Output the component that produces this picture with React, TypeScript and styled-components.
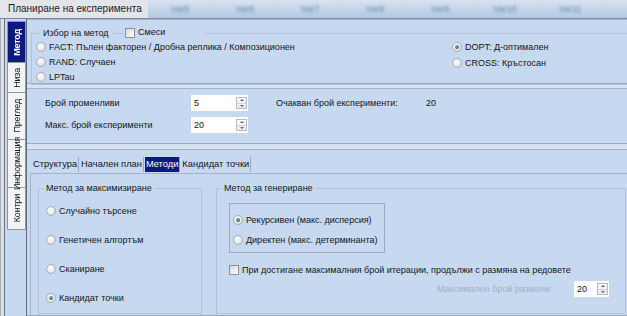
import React from 'react';
import styled, { createGlobalStyle } from 'styled-components';

const GlobalStyle = createGlobalStyle`
  html, body { margin: 0; padding: 0; background: #c6d9f1; }
  body { font-family: "Liberation Sans", Tahoma, sans-serif; font-size: 9px; color: #151515; }
  * { box-sizing: border-box; }
`;

const Window = styled.div`
  width: 627px;
  height: 316px;
  overflow: hidden;
  display: flex;
  flex-direction: column;
  background: #c6d9f1;
`;

const TitleBar = styled.div`
  height: 19px;
  flex: none;
  display: flex;
  border-bottom: 1px solid #7d8797;
  background: #e2e5ea;
`;

const Title = styled.div`
  width: 148px;
  flex: none;
  padding-left: 8px;
  line-height: 18px;
  font-size: 10px;
  color: #1b1b1b;
  white-space: nowrap;
`;

const HeaderCells = styled.div`
  flex: 1;
  min-width: 0;
  display: flex;
  background: linear-gradient(#d8e3f1, #b3c8e3);
`;

const HeaderCell = styled.div`
  width: 65px;
  flex: none;
  text-align: center;
  line-height: 18px;
  color: #6282b2;
  filter: blur(1.4px);
  border-right: 1px solid #c8d6ea;
`;

const Body = styled.div`
  flex: 1;
  min-height: 0;
  display: flex;
`;

const FrameEdge = styled.div`
  width: 5px;
  flex: none;
  border-left: 1px solid #a7adb6;
  border-right: 1px solid #67707e;
  background: #dde1e7;
`;

const SideTabs = styled.div`
  width: 22px;
  flex: none;
  display: flex;
  flex-direction: column;
  padding: 3px 0 0 2px;
  border-right: 1px solid #5f6b7d;
  background: #c6d9f1;
`;

const SideTab = styled.div<{ $active?: boolean; $h: number }>`
  height: ${p => p.$h}px;
  width: 19px;
  flex: none;
  display: flex;
  align-items: center;
  justify-content: center;
  border: 1px solid #8e96a3;
  margin-top: -1px;
  background: ${p => (p.$active ? '#0d1a7c' : '#f3f4f6')};
  color: ${p => (p.$active ? '#ffffff' : '#151515')};
  font-weight: ${p => (p.$active ? 'bold' : 'normal')};
`;

const SideLabel = styled.span`
  writing-mode: vertical-rl;
  text-orientation: mixed;
  transform: rotate(180deg);
  font-size: 9px;
  letter-spacing: -0.2px;
  line-height: 12px;
  white-space: nowrap;
`;

const Content = styled.div`
  flex: 1;
  min-width: 0;
  display: flex;
  flex-direction: column;
`;

const Section = styled.div<{ $h?: number }>`
  flex: ${p => (p.$h ? 'none' : '1')};
  height: ${p => (p.$h ? `${p.$h}px` : 'auto')};
  border-top: 1px solid #a3b3c8;
  border-bottom: 1px solid #9aaac0;
  background: #c6d9f1;
`;

const SectionGap = styled.div<{ $h: number }>`
  height: ${p => p.$h}px;
  flex: none;
  background: #d6e3f3;
`;

const Group = styled.fieldset<{ $w?: number; $h?: number }>`
  margin: 0;
  padding: 0;
  min-width: 0;
  border: 1px solid #b3c2d6;
  width: ${p => (p.$w ? `${p.$w}px` : 'auto')};
  height: ${p => (p.$h ? `${p.$h}px` : 'auto')};
  position: relative;
  flex: none;
`;

const Legend = styled.legend`
  padding: 0 3px;
  margin-left: 4px;
  line-height: 13px;
  white-space: nowrap;
`;

const MethodGroup = styled(Group)`
  margin: 7px 0 0 4px;
  height: 58px;
  border-right: none;
  display: flex;
  padding: 0 0 0 4px;
`;

const LegendCheck = styled.label`
  position: absolute;
  top: -14px;
  left: 91px;
  display: flex;
  align-items: center;
  gap: 3px;
  padding: 0 40px 0 2px;
  background: #c6d9f1;
  line-height: 13px;
`;

const Column = styled.div<{ $w?: number; $gap: number; $pt?: number; $pl?: number }>`
  display: flex;
  flex-direction: column;
  gap: ${p => p.$gap}px;
  width: ${p => (p.$w ? `${p.$w}px` : 'auto')};
  padding-top: ${p => p.$pt ?? 0}px;
  padding-left: ${p => p.$pl ?? 0}px;
  flex: none;
`;

const Option = styled.label`
  display: flex;
  align-items: center;
  gap: 3px;
  height: 14px;
  white-space: nowrap;
`;

const Radio = styled.span<{ $on?: boolean }>`
  width: 10px;
  height: 10px;
  flex: none;
  border-radius: 50%;
  border: 1px solid #a9adb3;
  background: radial-gradient(circle at 40% 35%, #ffffff, #d3d6da);
  position: relative;
  &::after {
    content: '';
    display: ${p => (p.$on ? 'block' : 'none')};
    position: absolute;
    inset: 2px;
    border-radius: 50%;
    background: radial-gradient(circle at 40% 35%, #6fb3a8, #1e5454);
  }
`;

const Check = styled.span`
  width: 10px;
  height: 10px;
  flex: none;
  border: 1px solid #8d9197;
  background: linear-gradient(135deg, #d5d8dc, #ffffff);
`;

const ParamsBody = styled.div`
  display: flex;
  padding: 6px 0 0 18px;
`;

const ParamRows = styled.div`
  display: flex;
  flex-direction: column;
  gap: 6px;
`;

const ParamRow = styled.div`
  display: flex;
  align-items: center;
  height: 16px;
`;

const ParamLabel = styled.span<{ $w: number; $muted?: boolean }>`
  width: ${p => p.$w}px;
  flex: none;
  white-space: nowrap;
  color: ${p => (p.$muted ? '#a3b0c2' : 'inherit')};
`;

const Spin = styled.div<{ $w: number }>`
  display: flex;
  height: 16px;
  width: ${p => p.$w}px;
  flex: none;
  background: #ffffff;
`;

const SpinValue = styled.span`
  flex: 1;
  padding-left: 3px;
  line-height: 16px;
`;

const SpinButtons = styled.span`
  width: 11px;
  margin: 2px 1px 2px 0;
  border: 1px solid #b6bcc5;
  display: flex;
  flex-direction: column;
  background: linear-gradient(#fafbfc, #e6e9ed);
`;

const SpinHalf = styled.span<{ $down?: boolean }>`
  flex: 1;
  display: flex;
  align-items: center;
  justify-content: center;
  border-top: ${p => (p.$down ? '1px solid #cfd4da' : 'none')};
  &::before {
    content: '';
    width: 0;
    height: 0;
    border-left: 2px solid transparent;
    border-right: 2px solid transparent;
    ${p => (p.$down ? 'border-top: 2px solid #5d6570;' : 'border-bottom: 2px solid #5d6570;')}
  }
`;

const Expected = styled.div`
  display: flex;
  align-items: center;
  height: 16px;
  margin-left: 28px;
`;

const TabsSection = styled(Section)`
  padding: 7px 0 0 3px;
  display: flex;
  flex-direction: column;
`;

const TabStrip = styled.div`
  display: flex;
  height: 16px;
  padding-left: 2px;
  flex: none;
`;

const Tab = styled.div<{ $active?: boolean }>`
  height: 15px;
  line-height: 15px;
  padding: 0 1px;
  margin-right: 1px;
  font-size: 9.3px;
  white-space: nowrap;
  border-right: 1px solid #9aa8bb;
  background: ${p => (p.$active ? '#0d1a7c' : 'transparent')};
  color: ${p => (p.$active ? '#ffffff' : 'inherit')};
`;

const TabPage = styled.div`
  flex: 1;
  display: flex;
  gap: 14px;
  padding: 8px 0 0 7px;
  border-top: 1px solid #a3b2c6;
  border-left: 1px solid #a3b2c6;
`;

const InnerBox = styled.div`
  width: 156px;
  height: 50px;
  margin: 8px 0 0 12px;
  border: 1px solid #9eabbd;
  display: flex;
  flex-direction: column;
  gap: 6px;
  padding: 9px 0 0 3px;
`;

const CheckRow = styled(Option)`
  margin: 10px 0 0 12px;
`;

const SwapRow = styled.div`
  display: flex;
  align-items: center;
  margin: 4px 0 0 220px;
`;

const Spinner: React.FC<{ value: string; w: number }> = ({ value, w }) => (
  <Spin $w={w}>
    <SpinValue>{value}</SpinValue>
    <SpinButtons>
      <SpinHalf />
      <SpinHalf $down />
    </SpinButtons>
  </Spin>
);

const headers = ['Var5', 'Var6', 'Var7', 'Var8', 'Var9', 'Var10', 'Var11'];
const sideTabs: { label: string; h: number; active?: boolean }[] = [
  { label: 'Метод', h: 42, active: true },
  { label: 'Низа', h: 31 },
  { label: 'Преглед', h: 48 },
  { label: 'Информация', h: 49 },
  { label: 'Контри', h: 43 },
];

export default function App() {
  return (
    <>
      <GlobalStyle />
      <Window>
        <TitleBar>
          <Title>Планиране на експеримента</Title>
          <HeaderCells>
            {headers.map(h => (
              <HeaderCell key={h}>{h}</HeaderCell>
            ))}
          </HeaderCells>
        </TitleBar>
        <Body>
          <FrameEdge />
          <SideTabs>
            {sideTabs.map(t => (
              <SideTab key={t.label} $h={t.h} $active={t.active}>
                <SideLabel>{t.label}</SideLabel>
              </SideTab>
            ))}
          </SideTabs>
          <Content>
            <Section $h={65}>
              <MethodGroup>
                <Legend>Избор на метод</Legend>
                <LegendCheck>
                  <Check />
                  Смеси
                </LegendCheck>
                <Column $w={416} $gap={2}>
                  <Option><Radio />FACT: Пълен факторен / Дробна реплика / Композиционен</Option>
                  <Option><Radio />RAND: Случаен</Option>
                  <Option><Radio />LPTau</Option>
                </Column>
                <Column $gap={2}>
                  <Option><Radio $on />DOPT: Д-оптимален</Option>
                  <Option><Radio />CROSS: Кръстосан</Option>
                </Column>
              </MethodGroup>
            </Section>
            <SectionGap $h={4} />
            <Section $h={56}>
              <ParamsBody>
                <ParamRows>
                  <ParamRow>
                    <ParamLabel $w={146}>Брой променливи</ParamLabel>
                    <Spinner value="5" w={57} />
                  </ParamRow>
                  <ParamRow>
                    <ParamLabel $w={146}>Макс. брой експерименти</ParamLabel>
                    <Spinner value="20" w={57} />
                  </ParamRow>
                </ParamRows>
                <Expected>
                  <ParamLabel $w={150}>Очакван брой експерименти:</ParamLabel>
                  <span>20</span>
                </Expected>
              </ParamsBody>
            </Section>
            <SectionGap $h={5} />
            <TabsSection>
              <TabStrip>
                <Tab>Структура</Tab>
                <Tab>Начален план</Tab>
                <Tab $active>Методи</Tab>
                <Tab>Кандидат точки</Tab>
              </TabStrip>
              <TabPage>
                <Group $w={164} $h={132}>
                  <Legend>Метод за максимизиране</Legend>
                  <Column $gap={15} $pt={9} $pl={7}>
                    <Option><Radio />Случайно търсене</Option>
                    <Option><Radio />Генетичен алгортъм</Option>
                    <Option><Radio />Сканиране</Option>
                    <Option><Radio $on />Кандидат точки</Option>
                  </Column>
                </Group>
                <Group $w={410} $h={132}>
                  <Legend>Метод за генериране</Legend>
                  <InnerBox>
                    <Option><Radio $on />Рекурсивен (макс. дисперсия)</Option>
                    <Option><Radio />Директен (макс. детерминанта)</Option>
                  </InnerBox>
                  <CheckRow>
                    <Check />
                    При достигане максималния брой итерации, продължи с размяна на редовете
                  </CheckRow>
                  <SwapRow>
                    <ParamLabel $w={137} $muted>Максимален брой размени</ParamLabel>
                    <Spinner value="20" w={35} />
                  </SwapRow>
                </Group>
              </TabPage>
            </TabsSection>
          </Content>
        </Body>
      </Window>
    </>
  );
}
